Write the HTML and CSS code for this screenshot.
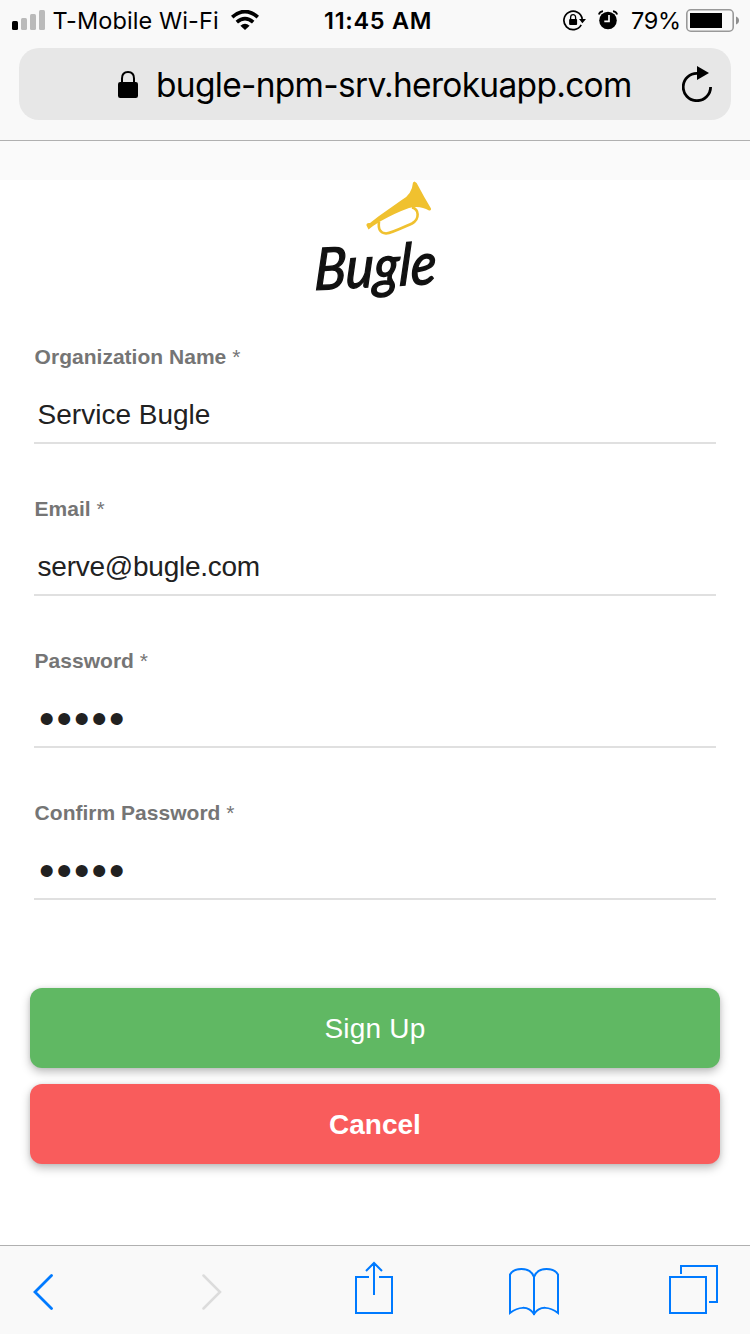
FILE: index.html
```html
<!DOCTYPE html>
<html lang="en">
<head>
<meta charset="utf-8">
<title>Bugle</title>
<link rel="stylesheet" href="styles.css">
</head>
<body>
<div class="screen">
  <header class="browser-bar">
    <div class="status">
      <div class="status-left">
        <svg class="signal" width="33" height="20" viewBox="0 0 33 20"><rect y="11" width="6" height="9" rx="1.5"/><g fill="#bababa"><rect x="9" y="8" width="6" height="12" rx="1.5"/><rect x="18" y="4" width="6" height="16" rx="1.5"/><rect x="27" y="0" width="6" height="20" rx="1.5"/></g></svg>
        <span class="carrier">T-Mobile Wi-Fi</span>
        <svg class="wifi" width="28" height="20" viewBox="0 0 28 20"><g fill="none" stroke="#000" stroke-width="3.7"><path d="M1.200 7.100Q14-4 26.800 7.100"/><path d="M5.800 12.100Q14 5.100 22.200 12.100"/></g><path d="M9.400 15.800Q14 11.500 18.600 15.800L14 20Z"/></svg>
      </div>
      <span class="time">11:45 AM</span>
      <div class="status-right">
        <svg class="rotation" width="23" height="21" viewBox="0 0 23 21"><path d="M18.200 14.800A9.200 9.200 0 1 1 19.200 9" fill="none" stroke="#000" stroke-width="1.700"/><path d="M16 9h7l-3.600 4.200Z"/><rect x="6.100" y="9" width="8" height="6" rx="1"/><path d="M7.600 9.400V7.400a2.500 2.800 0 0 1 5 0v2" fill="none" stroke="#000" stroke-width="1.300"/></svg>
        <svg class="alarm" width="20" height="20" viewBox="0 0 20 20"><circle cx="10" cy="10.500" r="8.800"/><path d="M.8 4.500Q1.600 1.600 5 1.100M19.200 4.500Q18.400 1.600 15 1.100" fill="none" stroke="#000" stroke-width="1.700"/><path d="M11 5v6.400H6.300" fill="none" stroke="#f9f9f9" stroke-width="1.700"/></svg>
        <span class="percent">79%</span>
        <svg class="battery" width="53" height="23" viewBox="0 0 53 23"><rect x=".8" y=".8" width="46.400" height="21.400" rx="4" fill="none" stroke="#999" stroke-width="1.600"/><rect x="4" y="4" width="32" height="15"/><path d="M50 7.500q3 1.200 3 4t-3 4Z" fill="#8e8e8e"/></svg>
      </div>
    </div>
    <div class="address">
      <svg class="lock" width="20" height="27" viewBox="0 0 20 27"><path d="M4 12V7.500C4 3.300 6.200 1 10 1s6 2.300 6 6.500V12" fill="none" stroke="#000" stroke-width="2"/><rect y="11" width="20" height="16" rx="2.200"/></svg>
      <span class="url">bugle-npm-srv.herokuapp.com</span>
      <svg class="reload" width="30" height="36" viewBox="0 0 30 36"><path d="M28.600 21A13.700 13.700 0 1 1 15.500 7.300" fill="none" stroke="#000" stroke-width="2.800"/><path d="M15 0l12 7-12 7Z"/></svg>
    </div>
  </header>
  <main class="page">
    <svg class="logo" width="150" height="128" viewBox="300 180 150 128">
      <path d="M414.500 181.500Q417 182.500 418 185.500Q424 197 431 208.500Q431.500 211 429 210.500Q420 205 409 208Q395 213 380 221.500L373 226L368.500 229.500L366.500 225.500Q366 222.500 370 223L379 216L401 200.500Q412 195 413 182.500Z" fill="#f0c12f"/>
      <path d="M379 221.500C378 229 380 233 386 233.500C392 233 404 227 412 223.500C420 219 419 209 412 207.500" fill="none" stroke="#f0c12f" stroke-width="2.600"/>
      <text class="wordmark" transform="translate(314 290) rotate(-3) skewX(-5)" textLength="122" lengthAdjust="spacingAndGlyphs">Bugle</text>
    </svg>
    <form class="form">
      <label class="field"><span class="label">Organization Name <span class="star">*</span></span><span class="value">Service Bugle</span></label>
      <label class="field"><span class="label">Email <span class="star">*</span></span><span class="value tight">serve@bugle.com</span></label>
      <label class="field"><span class="label">Password <span class="star">*</span></span><span class="value dots">•••••</span></label>
      <label class="field"><span class="label">Confirm Password <span class="star">*</span></span><span class="value dots">•••••</span></label>
    </form>
    <div class="actions">
      <button class="btn signup">Sign Up</button>
      <button class="btn cancel">Cancel</button>
    </div>
  </main>
  <nav class="toolbar">
    <svg class="back" width="22" height="36" viewBox="0 0 22 36"><path d="M19.500 1.500L3 18l16.500 16.500"/></svg>
    <svg class="forward" width="22" height="36" viewBox="0 0 22 36"><path d="M2.500 1.500L19 18 2.500 34.500"/></svg>
    <svg class="share" width="38" height="54" viewBox="0 0 38 54"><path d="M14 16H1v36h36V16H24M19 34V2M11 10l8-8 8 8"/></svg>
    <svg class="book" width="50" height="50" viewBox="0 0 50 50"><path d="M25 48V10C23 4.500 18 2 12.500 2S3 4 1 7.500V46C9 40 19 38 25 47C31 38 41 40 49 46V7.500C47 4 43 2 37.500 2S27 4.500 25 10"/></svg>
    <svg class="tabs" width="49" height="49" viewBox="0 0 49 49"><path d="M1 12h36v36H1ZM12 9V1h36v36h-8"/></svg>
  </nav>
</div>
</body>
</html>
```
FILE: styles.css
```css
* { box-sizing: border-box; }
body { margin: 0; background: #fff; font-family: "Liberation Sans", Arial, sans-serif; }
svg { display: block; flex: none; }
.screen { width: 750px; height: 1334px; display: flex; flex-direction: column; overflow: hidden; }
.browser-bar { height: 141px; flex: none; background: #f9f9f9; border-bottom: 1px solid #b0b0b0; font-family: Inter, sans-serif; color: #000; }
.status { height: 40px; display: grid; grid-template-columns: 300px 150px 300px; align-items: center; font-size: 23.5px; line-height: 38px; white-space: nowrap; }
.status span { padding-top: 2px; }
.status-left, .status-right { display: flex; align-items: center; height: 40px; }
.status-left { padding-left: 12px; }
.carrier { width: 166px; margin-left: 7.5px; letter-spacing: 0.1px; }
.wifi { margin-left: 12px; }
.time { padding-left: 24px; font-weight: 600; letter-spacing: 0.7px; }
.status-right { padding-left: 113px; }
.alarm { margin-left: 12px; }
.percent { width: 55px; margin-left: 13px; letter-spacing: -0.3px; }
.address { height: 72px; margin: 8px 19px 0; padding-left: 99px; border-radius: 20px; background: #e7e7e7; display: flex; align-items: center; }
.url { width: 486px; margin-left: 18px; padding-top: 1px; font-size: 33.5px; letter-spacing: -0.7px; line-height: 72px; white-space: nowrap; }
.reload { margin: -1px 0 0 39.500px; }
.page { flex: 1; border-top: 39px solid #fafafa; }
.logo { margin: 0 auto; }
.wordmark { font: italic 400 58px Lato, sans-serif; fill: #111; stroke: #111; stroke-width: 1.4px; }
.form { padding: 37px 34px 0; display: flex; flex-direction: column; gap: 53px; }
.field { height: 99px; display: flex; flex-direction: column; border-bottom: 2px solid #e0e0e0; }
.label { height: 24px; padding-left: 0.6px; line-height: 24px; font-size: 21px; font-weight: 700; color: #757575; letter-spacing: 0.02px; }
.star { font-weight: 400; }
.value { margin: 25px 0 0 3.6px; height: 40px; line-height: 41px; font-size: 28px; color: #212121; }
.tight { letter-spacing: -0.25px; }
.value.dots { margin-left: 5px; font-size: 44px; letter-spacing: 2.1px; }
.actions { padding: 88px 30px 0; display: flex; flex-direction: column; gap: 16px; }
.btn { height: 80px; padding: 2px 0 0; border: 0; border-radius: 12px; color: #fff; font: 28px/78px "Liberation Sans", Arial, sans-serif; box-shadow: 0 4px 10px rgba(0,0,0,.26), 0 0 4px rgba(0,0,0,.08); }
.signup { background: #60b863; letter-spacing: 0.2px; }
.cancel { background: #f95c5c; font-weight: 700; }
.toolbar { height: 89px; flex: none; padding-left: 32px; border-top: 1px solid #b0b0b0; background: #f9f9f9; display: flex; align-items: center; }
.toolbar path { fill: none; stroke: #007aff; stroke-width: 2; }
.toolbar .back { margin-top: 4px; }
.toolbar .forward { margin: 4px 0 0 147px; }
.toolbar .back path { stroke-width: 2.8; stroke-linecap: round; }
.toolbar .forward path { stroke: #dcdcdc; stroke-width: 2.5; stroke-linecap: round; }
.share { margin: -4px 0 0 132px; }
.book { margin: 3px 0 0 116px; }
.tabs { margin: -1px 0 0 110px; }
```
